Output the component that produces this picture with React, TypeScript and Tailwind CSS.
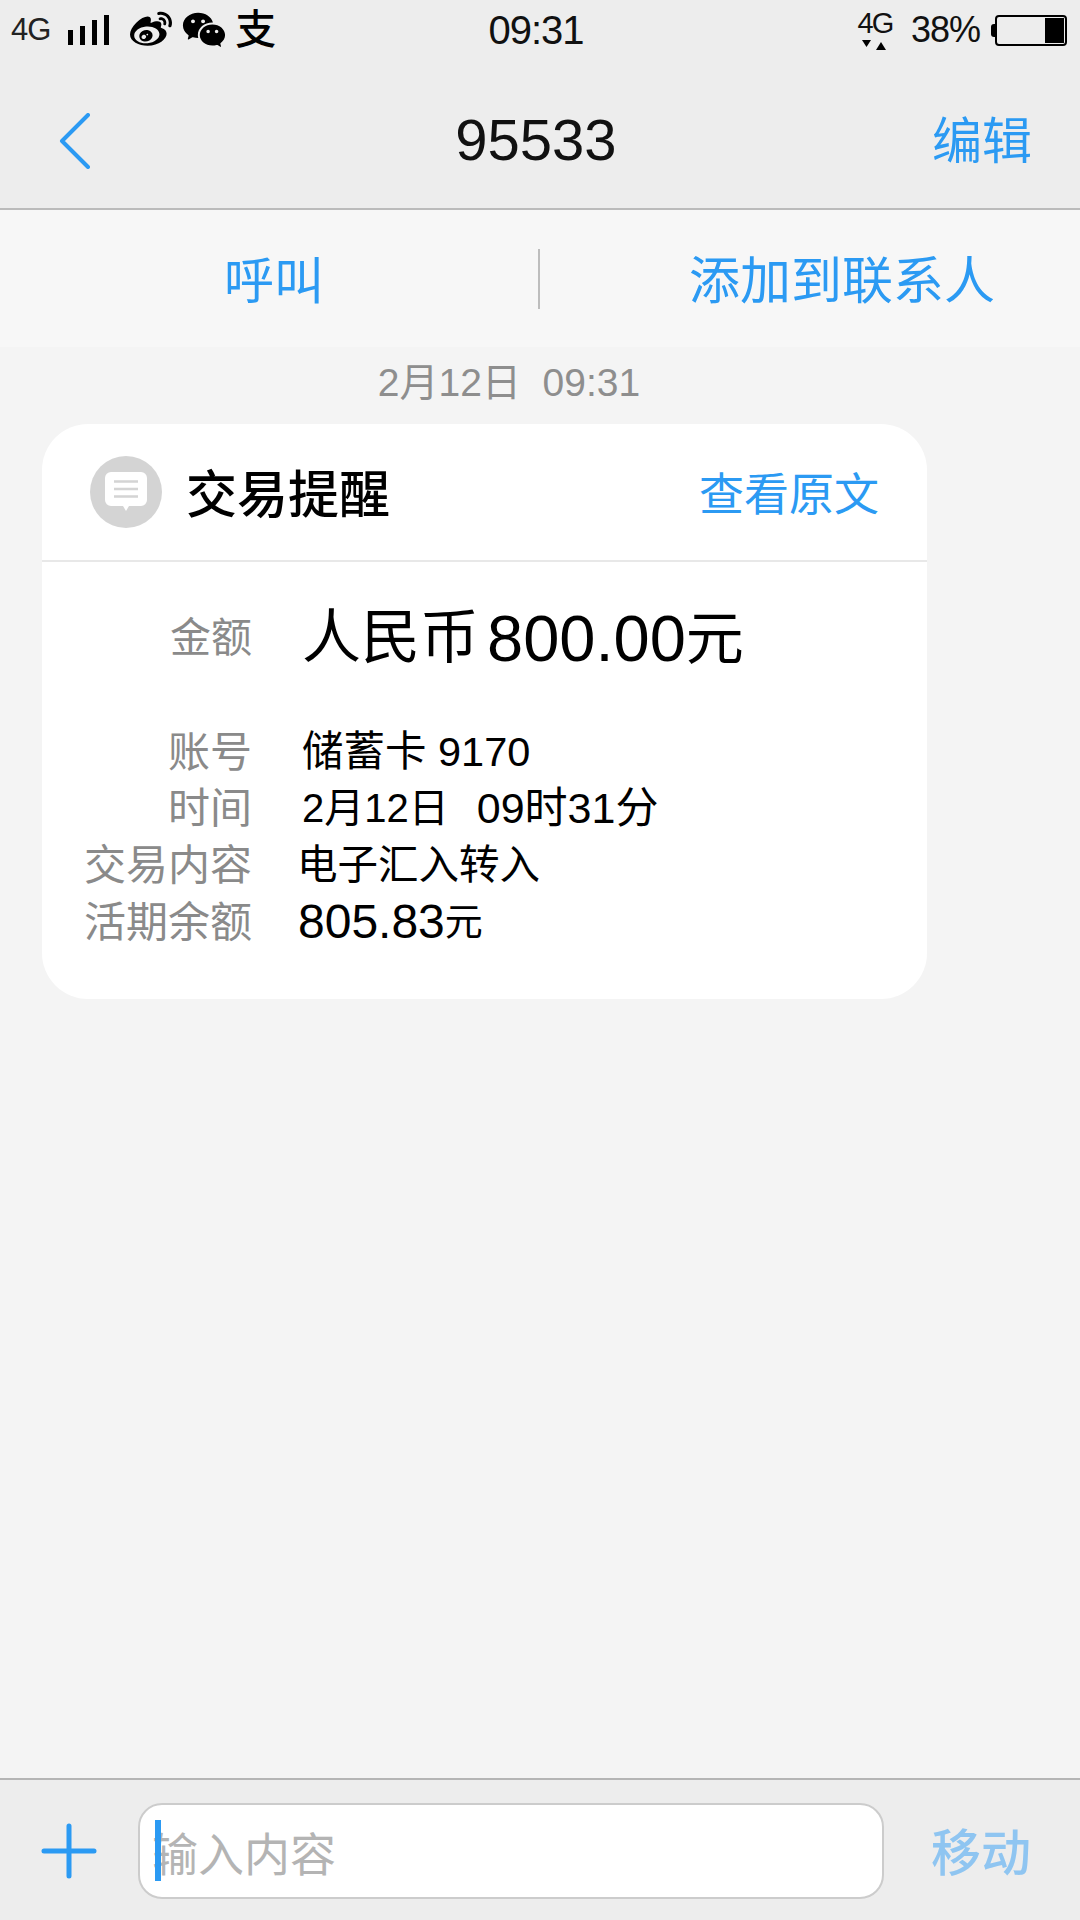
import React from 'react';
import { FaWeibo } from 'react-icons/fa';
import { RiWechatFill } from 'react-icons/ri';

const StatusBar: React.FC = () => (
  <div className="relative h-[60px] flex items-center justify-between pl-[11px] pr-[13px] text-[#111]">
    <div className="flex items-center">
      <span className="text-[31px] tracking-[-1px] text-[#222]">4G</span>
      <div className="ml-[18px] flex items-end gap-[7px] h-[30px]">
        <div className="w-[5px] h-[15px] bg-black"></div>
        <div className="w-[5px] h-[19px] bg-black"></div>
        <div className="w-[5px] h-[25px] bg-black"></div>
        <div className="w-[5px] h-[30px] bg-black"></div>
      </div>
      <FaWeibo className="ml-[21px] w-[42px] h-[42px] text-black" />
      <RiWechatFill className="ml-[9px] w-[46px] h-[46px] text-black" />
      <span className="ml-[8px] text-[41px] leading-none font-medium text-black">支</span>
    </div>
    <div className="absolute left-0 right-[8px] top-0 h-[60px] flex items-center justify-center text-[40px] tracking-[-1px]">
      09:31
    </div>
    <div className="flex items-center">
      <div className="flex flex-col items-center w-[38px]">
        <span className="text-[29px] leading-[28px] tracking-[-2px]">4G</span>
        <svg width="26" height="12" viewBox="0 0 26 12" className="mt-[2px]">
          <path d="M0 1h9l-4.5 7z" fill="#000" />
          <path d="M14 11h10l-5-8z" fill="#000" />
        </svg>
      </div>
      <span className="ml-[17px] text-[36px] tracking-[-1px]">38%</span>
      <div className="ml-[11px] w-[4px] h-[13px] bg-black rounded-l-[3px]"></div>
      <div className="w-[72px] h-[31px] border-2 border-black rounded-[4px] flex justify-end p-[1px]">
        <div className="w-[19px] h-full bg-black"></div>
      </div>
    </div>
  </div>
);

const NavBar: React.FC = () => (
  <div className="relative h-[150px] border-b-2 border-[#bbbbbb] flex items-center justify-between pt-[12px] pl-[59px] pr-[48px]">
    <svg width="32" height="56" viewBox="0 0 32 56" fill="none" className="mt-[1px]">
      <path d="M29 2 3 28l26 26" stroke="#2b9af3" strokeWidth="4" strokeLinecap="round" strokeLinejoin="round" />
    </svg>
    <div className="absolute inset-0 pt-[10px] pr-[8px] flex items-center justify-center text-[58px] text-[#111]">
      95533
    </div>
    <span className="pt-[5px] text-[50px] text-[#2b9af3]">编辑</span>
  </div>
);

const ActionBar: React.FC = () => (
  <div className="h-[137px] bg-[#f7f7f7] flex items-center">
    <div className="w-[538px] flex justify-center pt-[7px] pl-[10px] text-[50px] text-[#2b9af3]">呼叫</div>
    <div className="w-[2px] h-[60px] bg-[#bdbdbd]"></div>
    <div className="flex-1 flex justify-center pt-[7px] pl-[64px] text-[51px] text-[#2b9af3]">添加到联系人</div>
  </div>
);

const MessageIcon: React.FC = () => (
  <div className="w-[72px] h-[72px] rounded-full bg-[#d4d4d4] flex items-center justify-center">
    <svg width="44" height="42" viewBox="0 0 44 42">
      <path d="M7 1h30a6 6 0 0 1 6 6v22a6 6 0 0 1-6 6H25l-3 5-3-5H7a6 6 0 0 1-6-6V7a6 6 0 0 1 6-6z" fill="#fff" />
      <path d="M10 10.5h24M10 18h24M10 25.5h24" stroke="#d4d4d4" strokeWidth="2.5" />
    </svg>
  </div>
);

interface DetailRowProps {
  label: string;
  rowClass: string;
  children: React.ReactNode;
}

const DetailRow: React.FC<DetailRowProps> = ({ label, rowClass, children }) => (
  <div className={`flex items-center ${rowClass}`}>
    <div className="w-[210px] text-right text-[42px] text-[#8a8a8a]">{label}</div>
    {children}
  </div>
);

const MessageCard: React.FC = () => (
  <div className="ml-[42px] w-[885px] h-[575px] bg-white rounded-[46px]">
    <div className="h-[138px] border-b-2 border-[#e8e8e8] flex items-center px-[48px]">
      <MessageIcon />
      <span className="ml-[24px] pt-[8px] text-[51px] font-medium text-black">交易提醒</span>
      <span className="ml-auto pt-[8px] text-[45px] text-[#2b9af3]">查看原文</span>
    </div>
    <div className="pt-[11px]">
      <div className="flex items-center h-[131px]">
        <div className="w-[210px] text-right text-[41px] text-[#8a8a8a]">金额</div>
        <div className="ml-[50px] flex items-center text-[58px] text-black whitespace-pre">
          <span className="text-[59px]">人民币</span>
          <span className="ml-[8px] text-[65px]">800.00</span>
          <span>元</span>
        </div>
      </div>
      <div className="pt-[20px]">
        <DetailRow label="账号" rowClass="h-[56px]">
          <div className="ml-[50px] text-[41.5px] text-black">储蓄卡 9170</div>
        </DetailRow>
        <DetailRow label="时间" rowClass="h-[56px]">
          <div className="ml-[50px] flex items-center text-black whitespace-pre">
            <span className="text-[40px]">2月12日</span>
            <span className="ml-[28px] text-[43px]">09时31分</span>
          </div>
        </DetailRow>
        <DetailRow label="交易内容" rowClass="h-[58px]">
          <div className="ml-[45px] text-[40.5px] text-black">电子汇入转入</div>
        </DetailRow>
        <DetailRow label="活期余额" rowClass="h-[56px]">
          <div className="ml-[46px] flex items-center text-black text-[38px] whitespace-pre">
            <span className="text-[48px]">805.83</span>
            <span>元</span>
          </div>
        </DetailRow>
      </div>
    </div>
  </div>
);

const InputBar: React.FC = () => (
  <div className="h-[142px] pt-[2px] border-t-2 border-[#b5b5b5] bg-[#ededed] flex items-center">
    <svg width="56" height="56" viewBox="0 0 56 56" className="ml-[41px]">
      <path d="M3 28h50M28 3v50" stroke="#2b9af3" strokeWidth="5" strokeLinecap="round" />
    </svg>
    <div className="relative ml-[41px] w-[746px] h-[96px] bg-white border-2 border-[#cccccc] rounded-[24px] flex items-center pt-[8px] pl-[12px] text-[46px] text-[#b4b4b4]">
      <div className="absolute left-[15px] top-[15px] w-[6px] h-[61px] bg-[#2b9af3]"></div>
      输入内容
    </div>
    <span className="ml-[47px] pt-[7px] text-[50px] font-medium text-[#8fc5f1]">移动</span>
  </div>
);

const App: React.FC = () => {
  return (
    <div className="w-[1080px] h-[1920px] flex flex-col bg-[#f4f4f4] overflow-hidden font-['Liberation_Sans','Noto_Sans_CJK_SC',sans-serif]">
      <div className="bg-[#ededed]">
        <StatusBar />
        <NavBar />
      </div>
      <ActionBar />
      <div className="flex-1">
        <div className="h-[77px] pb-[4px] pr-[62px] flex items-center justify-center text-[39px] text-[#8e8e8e] whitespace-pre">
          2月12日  09:31
        </div>
        <MessageCard />
      </div>
      <InputBar />
    </div>
  );
};

export default App;
